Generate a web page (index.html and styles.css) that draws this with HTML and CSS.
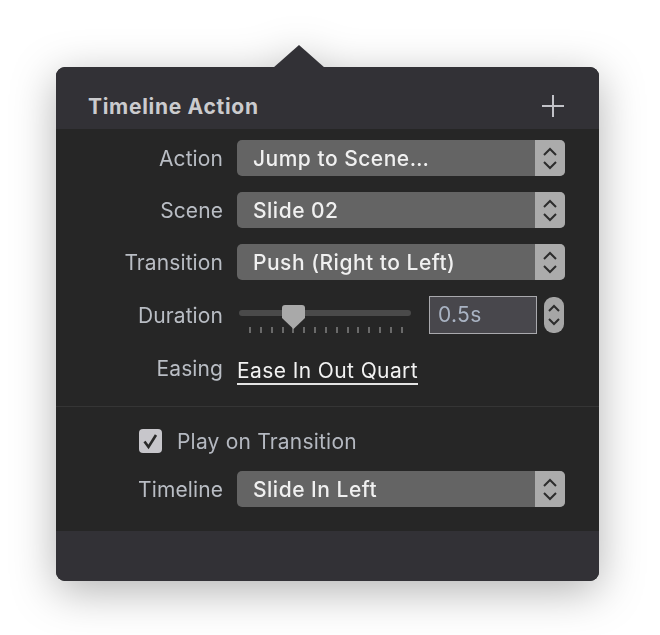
FILE: index.html
```html
<!DOCTYPE html>
<html lang="en">
<head>
    <meta charset="UTF-8">
    <title>Timeline Action</title>
    <link rel="stylesheet" href="styles.css">
</head>
<body>
    <div class="popover">
        <div class="arrow"></div>
        <div class="panel">
            <!-- Header -->
            <div class="panel-header">
                <h2 class="title">Timeline Action</h2>
                <svg class="add-icon" width="22" height="22" viewBox="0 0 22 22">
                    <path d="M11 0 V22 M0 11 H22" stroke="#c2c2c8" stroke-width="2" fill="none"/>
                </svg>
            </div>

            <!-- Action settings -->
            <div class="section">
                <div class="row">
                    <label class="row-label">Action</label>
                    <div class="select">
                        <span class="select-value">Jump to Scene…</span>
                        <span class="select-stepper">
                            <svg width="30" height="36" viewBox="0 0 30 36"><path d="M9 15 L15 9 L21 15 M9 22 L15 28 L21 22" stroke="#2c2c2c" stroke-width="2" fill="none"/></svg>
                        </span>
                    </div>
                </div>
                <div class="row">
                    <label class="row-label">Scene</label>
                    <div class="select">
                        <span class="select-value">Slide 02</span>
                        <span class="select-stepper">
                            <svg width="30" height="36" viewBox="0 0 30 36"><path d="M9 15 L15 9 L21 15 M9 22 L15 28 L21 22" stroke="#2c2c2c" stroke-width="2" fill="none"/></svg>
                        </span>
                    </div>
                </div>
                <div class="row">
                    <label class="row-label">Transition</label>
                    <div class="select">
                        <span class="select-value">Push (Right to Left)</span>
                        <span class="select-stepper">
                            <svg width="30" height="36" viewBox="0 0 30 36"><path d="M9 15 L15 9 L21 15 M9 22 L15 28 L21 22" stroke="#2c2c2c" stroke-width="2" fill="none"/></svg>
                        </span>
                    </div>
                </div>
                <div class="row row-duration">
                    <label class="row-label">Duration</label>
                    <div class="slider">
                        <div class="slider-track">
                            <svg class="slider-thumb" width="23" height="24" viewBox="0 0 23 24">
                                <path d="M3 0 H20 Q23 0 23 3 V13 L11.5 24 L0 13 V3 Q0 0 3 0 Z" fill="#a9a9a9"/>
                            </svg>
                        </div>
                        <div class="slider-ticks">
                            <span></span><span></span><span></span><span></span><span></span>
                            <span></span><span></span><span></span><span></span><span></span>
                            <span></span><span></span><span></span><span></span><span></span>
                        </div>
                    </div>
                    <div class="field">0.5s</div>
                    <div class="stepper">
                        <svg width="20" height="36" viewBox="0 0 20 36"><path d="M5 14 L10 9 L15 14 M5 22 L10 27 L15 22" stroke="#2c2c2c" stroke-width="2" fill="none"/></svg>
                    </div>
                </div>
                <div class="row">
                    <label class="row-label">Easing</label>
                    <span class="easing-link">Ease In Out Quart</span>
                </div>
            </div>

            <!-- Timeline settings -->
            <div class="section section-bottom">
                <div class="check-row">
                    <span class="checkbox">
                        <svg width="23" height="24" viewBox="0 0 23 24"><path d="M5.5 12.5 L9.5 18 L17 6" stroke="#2a2a2a" stroke-width="2.6" fill="none"/></svg>
                    </span>
                    <span class="check-label">Play on Transition</span>
                </div>
                <div class="row">
                    <label class="row-label">Timeline</label>
                    <div class="select">
                        <span class="select-value">Slide In Left</span>
                        <span class="select-stepper">
                            <svg width="30" height="36" viewBox="0 0 30 36"><path d="M9 15 L15 9 L21 15 M9 22 L15 28 L21 22" stroke="#2c2c2c" stroke-width="2" fill="none"/></svg>
                        </span>
                    </div>
                </div>
            </div>

            <div class="panel-footer"></div>
        </div>
    </div>
</body>
</html>
```

FILE: styles.css
```css
/* Base styles */
body {
    margin: 0;
    min-height: 100vh;
    background-color: #ffffff;
    font-family: 'Inter', 'Liberation Sans', sans-serif;
    font-size: 21px;
}
.popover {
    width: 543px;
    margin: 45px 0 0 56px;
    filter: drop-shadow(0 10px 22px rgba(0, 0, 0, 0.3));
}
.arrow {
    width: 52px;
    height: 23px;
    margin: 0 0 -1px 217px;
    background-color: #323136;
    clip-path: polygon(0 100%, 50% 0, 100% 100%);
}
.panel {
    background-color: #262626;
    border-radius: 9px;
    overflow: hidden;
}

/* Header */
.panel-header {
    height: 62px;
    box-sizing: border-box;
    padding: 16px 35px 0 32px;
    background-color: #323136;
    display: flex;
    align-items: center;
    justify-content: space-between;
}
.title {
    margin: 0;
    font-size: 21px;
    font-weight: 700;
    letter-spacing: 0.7px;
    color: #cbcbce;
}

/* Rows */
.section {
    padding: 11px 34px 20px 0;
    border-bottom: 1px solid #353535;
}
.section-bottom {
    padding: 22px 34px 24px 0;
    border-bottom: none;
}
.row {
    display: flex;
    align-items: center;
    height: 36px;
    margin-bottom: 16px;
}
.row:last-child {
    margin-bottom: 0;
}
.row-label {
    width: 167px;
    margin-right: 14px;
    text-align: right;
    letter-spacing: 0.1px;
    color: #b9bdc4;
}

/* Popup select */
.select {
    flex: 1;
    height: 36px;
    display: flex;
    border-radius: 5px;
    overflow: hidden;
    background-color: #646464;
}
.select-value {
    flex: 1;
    padding-left: 16px;
    line-height: 37px;
    font-weight: 500;
    letter-spacing: 0.5px;
    color: #f0f0f0;
}
.select-stepper {
    width: 30px;
    background-color: #ababab;
}
.select-stepper svg,
.stepper svg,
.checkbox svg {
    display: block;
}

/* Duration */
.row-duration {
    height: 38px;
}
.slider {
    width: 172px;
    height: 38px;
    margin-left: 2px;
    padding-top: 14px;
    box-sizing: border-box;
}
.slider-track {
    position: relative;
    height: 6px;
    border-radius: 3px;
    background-color: #4a4a4a;
}
.slider-thumb {
    position: absolute;
    left: 43px;
    top: -5px;
    z-index: 1;
}
.slider-ticks {
    display: flex;
    justify-content: space-between;
    padding: 0 8px 0 10px;
    margin-top: 11px;
}
.slider-ticks span {
    width: 2px;
    height: 6px;
    background-color: #6a6a6a;
}
.field {
    width: 108px;
    height: 38px;
    box-sizing: border-box;
    margin-left: 18px;
    padding-left: 8px;
    border: 1px solid #a9a9ad;
    background-color: #48474c;
    color: #a9b3c3;
    line-height: 36px;
    letter-spacing: 0.3px;
}
.stepper {
    width: 20px;
    height: 36px;
    margin-left: 7px;
    border-radius: 9px;
    background-color: #a6a6a6;
}

/* Easing */
.easing-link {
    color: #f2f2f2;
    line-height: 24px;
    letter-spacing: 0.4px;
    border-bottom: 2px solid #e4e4e4;
    margin-top: 8px;
}

/* Checkbox */
.check-row {
    display: flex;
    align-items: center;
    height: 24px;
    padding-left: 83px;
    margin-bottom: 18px;
}
.checkbox {
    width: 23px;
    height: 24px;
    margin-right: 15px;
    border-radius: 4px;
    background-color: #c7c6cb;
}
.check-label {
    letter-spacing: 0.2px;
    color: #b4b8c0;
}

.panel-footer {
    height: 50px;
    background-color: #323136;
}
```
